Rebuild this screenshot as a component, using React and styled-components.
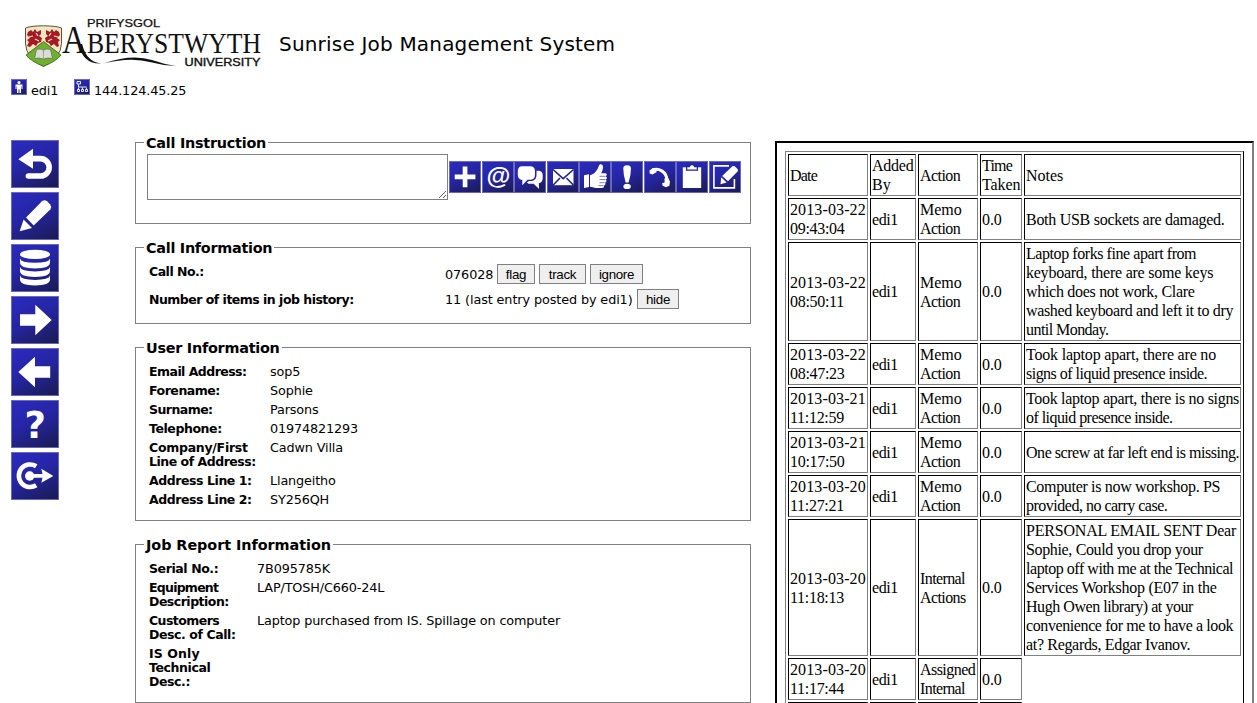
import React from "react";
import styled, { createGlobalStyle } from "styled-components";

const Global = createGlobalStyle`
  body { margin: 0; background: #fff; color: #000; overflow: hidden; }
`;

const sans = `"DejaVu Sans", Verdana, sans-serif`;

const Page = styled.div`
  box-sizing: border-box;
  width: 1257px;
  height: 703px;
  overflow: hidden;
  font-family: ${sans};
  font-size: 12.8px;
`;
const Header = styled.header`
  display: flex;
  align-items: flex-start;
  height: 79px;
`;
const Logo = styled.svg`
  display: block;
  flex: none;
  width: 250px;
  height: 60px;
  margin: 13px 0 0 20px;
  overflow: visible;
`;
const Title = styled.h1`
  margin: 32px 0 0 9px;
  font-size: 20px;
  line-height: 24px;
  font-weight: 400;
  letter-spacing: 0.19px;
  white-space: nowrap;
`;
const StatusBar = styled.div`
  display: flex;
  height: 55px;
  padding-left: 11px;
`;
const Status = styled.div`
  display: flex;
  gap: 4px;
  width: ${(p) => p.$width}px;
  line-height: 23px;
  letter-spacing: -0.1px;
`;
const Body = styled.main`
  display: flex;
  align-items: flex-start;
`;
const SideNav = styled.nav`
  display: flex;
  flex-direction: column;
  gap: 4px;
  width: 124px;
  padding: 6px 0 0 11px;
  box-sizing: border-box;
  margin-right: 11px;
`;
const Tile = styled.svg`
  display: block;
  flex: none;
  width: ${(p) => p.$size}px;
  height: ${(p) => p.$size}px;
  margin-right: ${(p) => p.$after || 0}px;
`;
const Forms = styled.div`
  display: flex;
  flex-direction: column;
  gap: 15px;
  width: 616px;
`;
const Fieldset = styled.fieldset`
  box-sizing: border-box;
  height: ${(p) => p.$height}px;
  margin: 0;
  border: 1px solid #808080;
  padding: ${(p) => p.$pad};
  min-width: 0;
`;
const Legend = styled.legend`
  height: 17px;
  line-height: 19px;
  margin-left: ${(p) => p.$shift || 0}px;
  padding: 0 2px;
  font-size: 14.4px;
  font-weight: 700;
  letter-spacing: ${(p) => p.$track}px;
  white-space: nowrap;
`;
const Compose = styled.div`
  display: flex;
  align-items: flex-start;
`;
const TextArea = styled.textarea`
  box-sizing: border-box;
  width: 301px;
  height: 46px;
  margin: 0 1px 0 0;
  border: 1px solid #808080;
  background: #fff;
  resize: both;
`;
const Toolbar = styled.div`
  display: flex;
  padding-top: 7px;
`;
const Row = styled.div`
  display: grid;
  grid-template-columns: ${(p) => p.$label}px 1fr;
  margin-bottom: 5px;
  line-height: 14px;
`;
const Label = styled.div`
  font-size: 12.5px;
  font-weight: 700;
  line-height: ${(p) => p.$line || 14}px;
  white-space: nowrap;
`;
const Line = styled.div`
  height: ${(p) => p.$height || "auto"};
  letter-spacing: ${(p) => p.$track || 0}px;
  white-space: nowrap;
`;
const Value = styled.div`
  letter-spacing: -0.14px;
  white-space: nowrap;
`;
const CallRow = styled.div`
  display: grid;
  grid-template-columns: 296px 1fr;
  height: 20px;
  margin-bottom: 5px;
`;
const Controls = styled.div`
  display: flex;
  gap: 4px;
  line-height: 21px;
`;
const CallText = styled.span`
  width: ${(p) => p.$width}px;
  letter-spacing: -0.1px;
  white-space: nowrap;
`;
const Button = styled.button`
  box-sizing: border-box;
  width: ${(p) => p.$width}px;
  height: 20px;
  padding: 1px 0 0;
  border: 1px solid #808080;
  border-radius: 0;
  background: #efefef;
  color: #000;
  font: 13.33px/17px "Liberation Sans", Arial, sans-serif;
  letter-spacing: -0.3px;
`;
const History = styled.section`
  box-sizing: border-box;
  width: 479px;
  height: 640px;
  margin: 7px 0 0 24px;
  padding: 8px;
  border: 2px solid;
  border-color: #000 #808080 #808080 #000;
`;
const Table = styled.table`
  table-layout: fixed;
  width: 459px;
  border: 1px solid;
  border-color: #808080 #000 #000 #808080;
  border-collapse: separate;
  border-spacing: 2px;
  empty-cells: hide;
  font: 16px/19px "Liberation Serif", "Times New Roman", serif;
`;
const Cell = styled.td`
  box-sizing: border-box;
  padding: 1px;
  border: 1px solid;
  border-color: #000 #808080 #808080 #000;
  vertical-align: middle;
`;

const TileIcon = ({ size, after, box = 48, children }) => (
  <Tile $size={size} $after={after} viewBox={`0 0 ${box} ${box}`}>
    <defs>
      <linearGradient id="tile" x1="0.25" y1="0" x2="0.75" y2="1">
        <stop offset="0" stopColor="#2a2abb" />
        <stop offset="0.45" stopColor="#2525a4" />
        <stop offset="1" stopColor="#1c1c5c" />
      </linearGradient>
    </defs>
    <rect width={box} height={box} fill="url(#tile)" />
    <rect x="0.5" y="0.5" width={box - 1} height={box - 1} fill="none" stroke="#8080c8" strokeOpacity="0.75" />
    <g fill="#fff">{children}</g>
  </Tile>
);

const side = [
  <g key="back">
    <path d="M7.3 19.2 22 8.8v20z" />
    <path d="M20 18.6h9.5a8.7 8.7 0 0 1 0 17.4H17.4" fill="none" stroke="#fff" strokeWidth="5.6" strokeLinecap="round" />
  </g>,
  <g key="pencil">
    <path d="M15 25.5 31 9.2q2.5-2 5 0l3 3q2 2.5.5 5L22.7 33.5z" />
    <path d="M12.6 27.6 21 36 8.7 39.3z" />
  </g>,
  <g key="database">
    <ellipse cx="24" cy="10.4" rx="15" ry="4.7" />
    {[14.4, 23, 31.5].map((y) => (
      <path key={y} d={`M9 ${y}q1 4.400 15 4.400t15-4.400v3.800q0 6.200-15 6.200t-15-6.200z`} />
    ))}
  </g>,
  <path key="next" d="M9 18.3h15.3V8.7L40.7 24 24.3 39.3V29.7H9z" />,
  <path key="prev" d="M39.2 18.3H24V8.7L7.3 24 24 39.3V29.7h15.2z" />,
  <text key="help" x="24.3" y="38" textAnchor="middle" fontFamily="DejaVu Sans" fontWeight="700" fontSize="37">?</text>,
  <g key="logout">
    <path d="M25.2 14.2A11.300 11.300 0 1 0 25.2 33.300" fill="none" stroke="#fff" strokeWidth="4.6" />
    <circle cx="18.7" cy="24" r="4.7" />
    <path d="M18 22.1h13.500l-1.200-5.400L42.3 24 30.3 30.8l1.200-5H18z" />
  </g>,
];

const tools = [
  [1, <path d="M13.7 5.5h4.7v8h8v4.7h-8v8h-4.700v-8h-8v-4.700h8z" />],
  [0, <text x="16.4" y="22.600" textAnchor="middle" fontFamily="Liberation Sans" fontWeight="700" fontSize="24.5">@</text>],
  [1, <g>
    <path d="M8 5.3h9q4 .5 4 5v3.500q0 4.500-4 5h-3.500l-5.200 5.400V19Q4 18.500 3.800 14v-4Q4 5.500 8 5.300z" />
    <path d="M22.500 9.800h2.500q3.500.5 3.700 4v3.500q-.2 4-3.200 4.700l-.7.2.3 5.800-5.500-5.300h-5.200l-1.500-1.200 2-1.400h3q4.600-.8 4.600-6z" />
  </g>],
  [0, <g>
    <path d="M6 8h20.500v16.200H6z" />
    <path d="m6 8.500 10.200 9.200L26.500 8.500M6 24.200l7-7.200m13.500 7.200-7-7.200" fill="none" stroke="#23238e" strokeWidth="1.600" />
  </g>],
  [0, <g>
    <path d="M5 14.200l5-1V26l-5 1z" />
    <path d="M11 14.300c4-.8 7.500-5 8.800-9.300.6-2.700 4.200-2.300 4.200.8 0 2.500-.8 4.600-1.800 6.500h4.300c1.700.2 1.700 2.400.2 3 1.500.6 1.600 2.800 0 3.300 1.200.8 1 2.700-.6 3.100.8 1 .2 2.700-1.200 2.900.4 1.400-.4 2.400-2.100 2.400H17c-2.400 0-3.800-1.200-6-1.200z" />
    <path d="M20.500 15.300h6M20.500 18.600h6M20.500 21.700h5M19.500 24.600h5" stroke="#5858b8" strokeWidth="0.800" />
  </g>],
  [1, <g>
    <path d="M12.300 7.500q0-3.300 3.800-3.300T20 7.500q0 6-2.400 14h-3Q12.300 13.500 12.300 7.500z" />
    <ellipse cx="16.100" cy="25.400" rx="3.700" ry="2.700" />
  </g>],
  [0, <g>
    <path d="M8.500 9.300C14 6.300 22.800 10.500 23 19.500" fill="none" stroke="#fff" strokeWidth="3" />
    <path d="m5.500 9.600 3.400-2.700 3.900 1-.3 3.300-4.200 2.400-2.600-1.200zM20.500 17.400l3.300-.8 2.200 4-.6 4.200-3.300 1.400-3.500-1.500-.5-2.400 2.500-.7z" />
  </g>],
  [1, <g>
    <path d="M6.800 6.300h18.400V27H6.800z" />
    <path d="M10.600 5.500h2.800q.4-1.800 2.600-1.800t2.600 1.800h2.800v3.600H10.600z" stroke="#23238e" strokeWidth="1.300" />
  </g>],
  [0, <g>
    <path d="M20 4.900H4.900v22h20.500v-9" fill="none" stroke="#fff" strokeWidth="1.600" />
    <path d="M13.200 15 23.300 5.300q1.200-.8 2.400 0L28.500 8q1 1.300 0 2.500L19 20.300z" />
    <path d="m12.200 16.200 5.500 5.400-6.200 1.700z" />
  </g>],
];

const Crest = () => (
  <g>
    <path d="M5.500 15q6-2.200 18-2.200t18 2.200v15.500Q41 45 23.500 53.300 6 45 5.500 30.500z" fill="#f0e8c4" stroke="#5c5138" strokeWidth="1" />
    <path d="M8 19l3-2 2 2 2-3 2 3 4-2v4l-2 2 3 2-1 4-3 1-2 3-3-2-3 3-3-1 2-4-2-2 3-2-3-3zM39 19l-3-2-2 2-2-3-2 3-4-2v4l2 2-3 2 1 4 3 1 2 3 3-2 3 3 2-1-1-4 2-2-3-2 3-3z" fill="#a51a24" />
    <path d="m9 24 4-1m3-3 2 3m-3 3 4 2M38 24l-4-1m-3-3-2 3m3 3-4 2" stroke="#f0e8c4" strokeWidth="1.2" />
    <path d="M23.500 28.500 41 42Q36 48.500 23.500 53.300 11 48.500 6 42z" fill="#6fb02c" stroke="#37551d" strokeWidth="0.8" />
    <path d="M16.500 36.500q4-1.500 7 .8 3-2.300 7-.8l2 9q-5-1.200-9 .6-4-1.800-9-.6z" fill="#dcdcd6" stroke="#666" strokeWidth="0.7" />
    <path d="M23.500 37.500v8" stroke="#888" strokeWidth="0.7" />
  </g>
);

const Brand = () => (
  <Logo viewBox="0 0 250 60">
    <Crest />
    <g fill="#111">
      <text x="67" y="14" fontFamily="Liberation Sans" fontSize="10" stroke="#111" strokeWidth="0.25" textLength="73" lengthAdjust="spacingAndGlyphs">PRIFYSGOL</text>
      <text x="42" y="40" fontFamily="Liberation Serif" fontSize="39" textLength="24" lengthAdjust="spacingAndGlyphs">A</text>
      <text x="67" y="40" fontFamily="Liberation Serif" fontSize="29.5" textLength="174" lengthAdjust="spacingAndGlyphs">BERYSTWYTH</text>
      <text x="164.500" y="53.3" fontFamily="Liberation Sans" fontSize="10" stroke="#111" strokeWidth="0.35" textLength="76" lengthAdjust="spacingAndGlyphs">UNIVERSITY</text>
      <path d="M58.500 31h3.600q2.500 10 7.400 14.300 4 4.200 11.500 5.200-10 .3-15.500-5.200Q61 41 58.500 31z" />
      <path d="M84 50.300q28-9.500 48-3.200 12 4.400 24 5.800-13-.3-25-3.700-20-5.500-47 1.100z" />
    </g>
  </Logo>
);

const users = [
  [[["Email Address:", -0.54]], "sop5"],
  [[["Forename:", -0.47]], "Sophie"],
  [[["Surname:", -0.55]], "Parsons"],
  [[["Telephone:", -0.42]], "01974821293"],
  [[["Company/First", -0.27], ["Line of Address:", -0.48]], "Cadwn Villa"],
  [[["Address Line 1:", -0.43]], "Llangeitho"],
  [[["Address Line 2:", -0.43]], "SY256QH"],
];
const job = [
  [[["Serial No.:", -0.41]], "7B095785K"],
  [[["Equipment", -0.75], ["Description:", -0.5]], "LAP/TOSH/C660-24L"],
  [[["Customers", -0.55], ["Desc. of Call:", -0.42]], "Laptop purchased from IS. Spillage on computer"],
  [[["IS Only", 0.1], ["Technical", -0.4], ["Desc.:", -0.4]], ""],
];

const edi = [["edi1", -0.4]];
const zero = [["0.0", -0.1]];
const memo = [["Memo", 0], ["Action", -0.55]];
const stamp = (date, time) => [[date, 0.12], [time, -0.3]];
const history = [
  [[["Date", -0.8]], [["Added", -0.25], ["By", 0]], [["Action", -0.55]], [["Time", -0.8], ["Taken", -0.1]], [["Notes", 0]]],
  [stamp("2013-03-22", "09:43:04"), edi, memo, zero, [["Both USB sockets are damaged.", -0.28]]],
  [stamp("2013-03-22", "08:50:11"), edi, memo, zero, [
    ["Laptop forks fine apart from", -0.43],
    ["keyboard, there are some keys", -0.24],
    ["which does not work, Clare", -0.3],
    ["washed keyboard and left it to dry", -0.34],
    ["until Monday.", -0.55],
  ]],
  [stamp("2013-03-22", "08:47:23"), edi, memo, zero, [
    ["Took laptop apart, there are no", -0.2],
    ["signs of liquid presence inside.", -0.52],
  ]],
  [stamp("2013-03-21", "11:12:59"), edi, memo, zero, [
    ["Took laptop apart, there is no signs", -0.31],
    ["of liquid presence inside.", -0.55],
  ]],
  [stamp("2013-03-21", "10:17:50"), edi, memo, zero, [["One screw at far left end is missing.", -0.46]]],
  [stamp("2013-03-20", "11:27:21"), edi, memo, zero, [
    ["Computer is now workshop. PS", -0.32],
    ["provided, no carry case.", -0.5],
  ]],
  [stamp("2013-03-20", "11:18:13"), edi, [["Internal", -0.6], ["Actions", -0.6]], zero, [
    ["PERSONAL EMAIL SENT Dear", -0.2],
    ["Sophie, Could you drop your", -0.35],
    ["laptop off with me at the Technical", -0.46],
    ["Services Workshop (E07 in the", -0.27],
    ["Hugh Owen library) at your", -0.45],
    ["convenience for me to have a look", -0.4],
    ["at? Regards, Edgar Ivanov.", -0.33],
  ]],
  [stamp("2013-03-20", "11:17:44"), edi, [["Assigned", -0.55], ["Internal", -0.6]], zero, []],
  [[["\u00a0", 0]], [["\u00a0", 0]], [["\u00a0", 0]], [["\u00a0", 0]], []],
];

const Lines = ({ lines }) => lines.map(([text, track]) => <Line key={text} $track={track}>{text}</Line>);

export default function App() {
  return (
    <Page>
      <Global />
      <Header>
        <Brand />
        <Title>Sunrise Job Management System</Title>
      </Header>
      <StatusBar>
        <Status $width={63}>
          <TileIcon size={16} box={16}>
            <circle cx="8" cy="3.5" r="1.5" />
            <path d="M4.500 5.500h7V10h-1V7.500h-.5V14H8.500v-3.500h-1V14H6V7.500h-.5V10h-1z" />
          </TileIcon>
          edi1
        </Status>
        <Status $width={140}>
          <TileIcon size={16} box={16}>
            <path d="M3 2.500h3.500v2.500H3zM4.500 5.500v2.500h8M4.500 10.500v-2M8.500 10.500v-2M12.500 10.500v-2M3.500 10.500h2v2h-2zM7.500 10.500h2v2h-2zM11.500 10.500h2v2h-2z" fill="none" stroke="#fff" strokeWidth="0.9" />
          </TileIcon>
          144.124.45.25
        </Status>
      </StatusBar>
      <Body>
        <SideNav>
          {side.map((icon, i) => <TileIcon key={i} size={48}>{icon}</TileIcon>)}
        </SideNav>
        <Forms>
          <Fieldset $height={90} $pad="3px 0 0 11px">
            <Legend $shift={-3} $track={-0.25}>Call Instruction</Legend>
            <Compose>
              <TextArea />
              <Toolbar>
                {tools.map(([after, icon], i) => <TileIcon key={i} size={32} box={32} after={after}>{icon}</TileIcon>)}
              </Toolbar>
            </Compose>
          </Fieldset>
          <Fieldset $height={85} $pad="8px 0 0 13px">
            <Legend $shift={-5} $track={-0.27}>Call Information</Legend>
            <CallRow>
              <Label $line={15}><Line $track={-0.5}>Call No.:</Line></Label>
              <Controls>
                <CallText $width={48}>076028</CallText>
                <Button $width={38}>flag</Button>
                <Button $width={47}>track</Button>
                <Button $width={53}>ignore</Button>
              </Controls>
            </CallRow>
            <CallRow>
              <Label $line={21}><Line $track={-0.51}>Number of items in job history:</Line></Label>
              <Controls>
                <CallText $width={188}>11 (last entry posted by edi1)</CallText>
                <Button $width={42}>hide</Button>
              </Controls>
            </CallRow>
          </Fieldset>
          <Fieldset $height={182} $pad="9px 0 0 13px">
            <Legend $shift={-5} $track={-0.25}>User Information</Legend>
            {users.map(([k, v]) => (
              <Row key={k[0][0]} $label={121}><Label><Lines lines={k} /></Label><Value>{v}</Value></Row>
            ))}
          </Fieldset>
          <Fieldset $height={167} $pad="9px 0 0 13px">
            <Legend $shift={-5} $track={-0.05}>Job Report Information</Legend>
            {job.map(([k, v]) => (
              <Row key={k[0][0]} $label={108}><Label><Lines lines={k} /></Label><Value>{v}</Value></Row>
            ))}
          </Fieldset>
        </Forms>
        <History>
          <Table>
            <colgroup>
              {[80, 46, 60, 42, 217].map((w) => <col key={w} width={w} />)}
            </colgroup>
            <tbody>
              {history.map((row, i) => (
                <tr key={i}>
                  {row.map((lines, j) => <Cell key={j}>{lines.length ? <Lines lines={lines} /> : null}</Cell>)}
                </tr>
              ))}
            </tbody>
          </Table>
        </History>
      </Body>
    </Page>
  );
}
